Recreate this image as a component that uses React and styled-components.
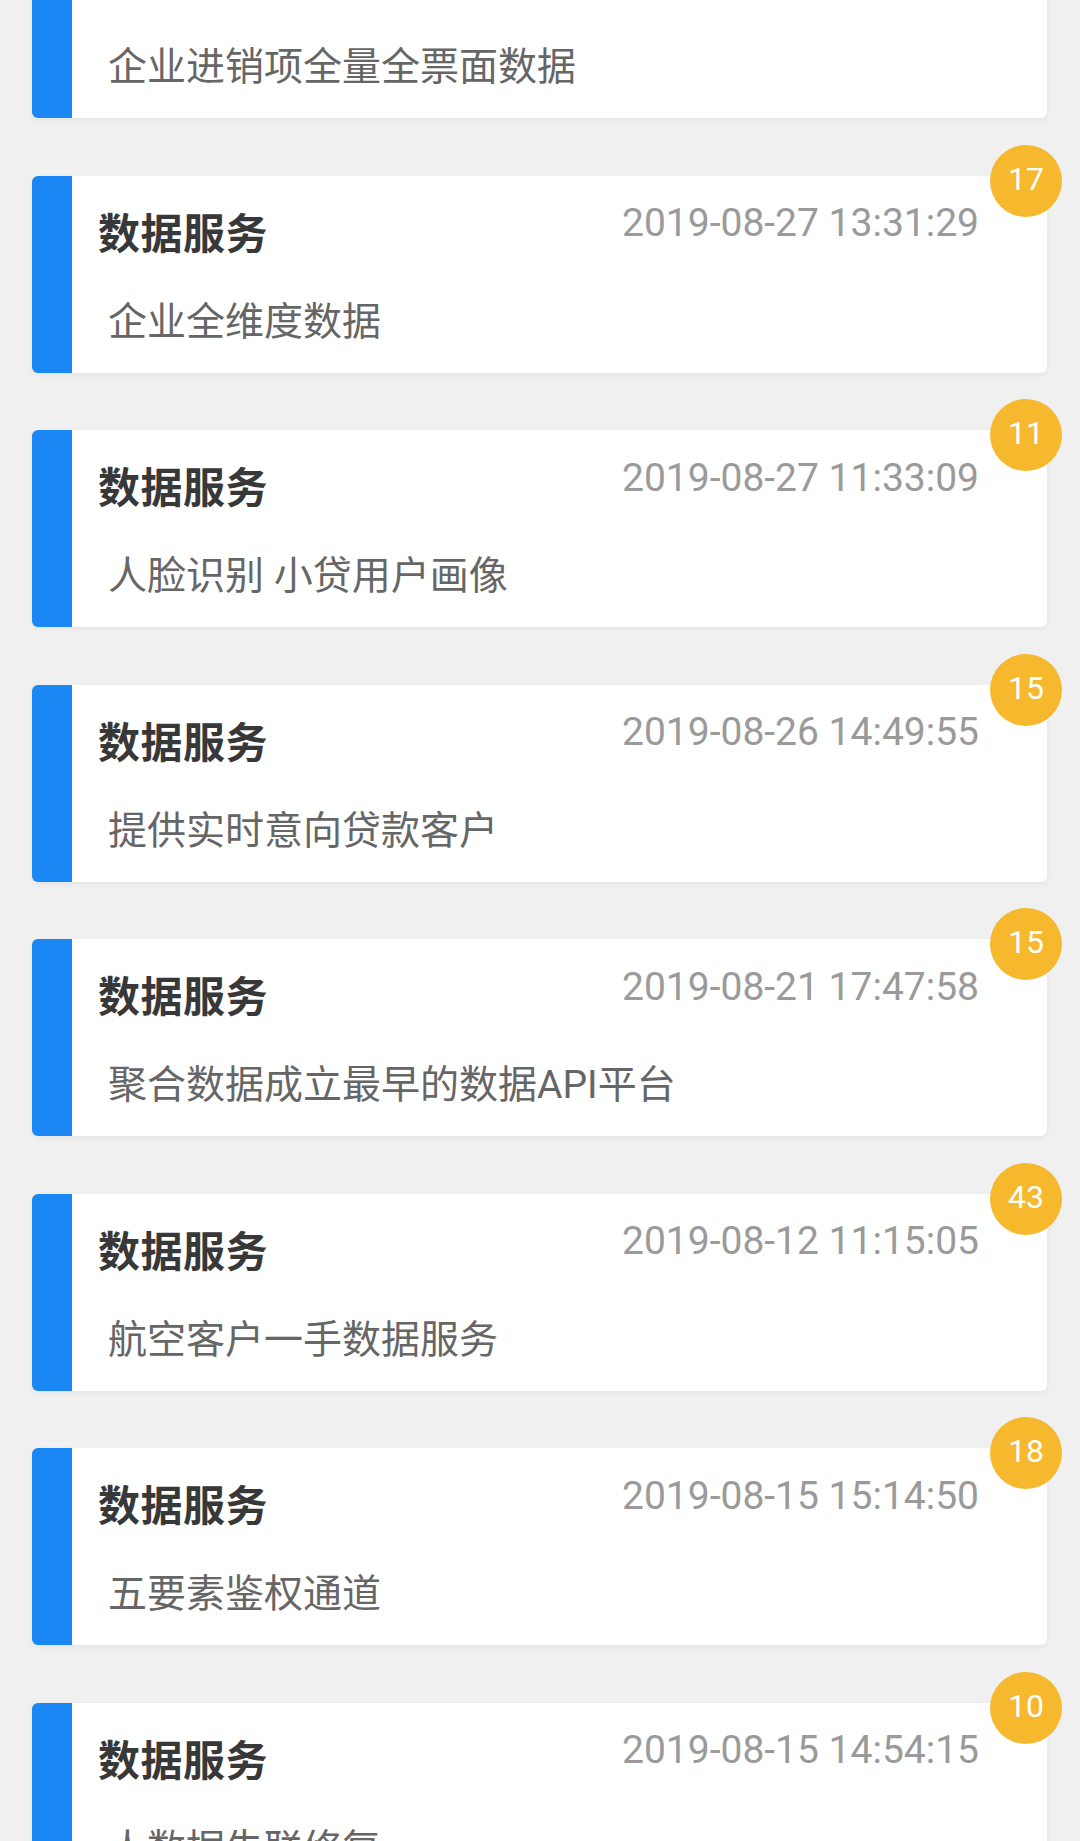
import React from 'react';
import styled, { createGlobalStyle } from 'styled-components';

const GlobalStyle = createGlobalStyle`
  html, body {
    margin: 0;
    padding: 0;
    background: #f0f0f0;
  }
  body {
    font-family: Roboto, "Noto Sans CJK SC", sans-serif;
    overflow: hidden;
  }
`;

const Page = styled.div`
  height: 1841px;
  overflow: hidden;
  background: #f0f0f0;
`;

// list is scrolled a bit, so first card is cut at the top
const List = styled.div`
  display: flex;
  flex-direction: column;
  gap: 57.5px;
  padding: 0 33px 0 32px;
  margin-top: -79px;
`;

const Card = styled.div`
  position: relative;
  box-sizing: border-box;
  height: 197px;
  background: #fff;
  border-left: 40px solid #1a87f5;
  border-radius: 6px;
  box-shadow: 0 2px 5px rgba(0, 0, 0, 0.05);
  padding: 20px 68px 0 26px;
  display: flex;
  flex-direction: column;
`;

const Header = styled.div`
  display: flex;
  justify-content: space-between;
  align-items: flex-start;
`;

const Title = styled.div`
  font-family: "Noto Sans CJK SC", sans-serif;
  font-size: 42px;
  font-weight: 700;
  line-height: 58px;
  color: #383838;
  margin-top: 6px;
  letter-spacing: 0.5px;
`;

const Time = styled.div`
  font-family: Roboto, sans-serif;
  font-size: 39px;
  line-height: 54px;
  color: #9a9a9a;
  margin-top: 0.5px;
`;

const Desc = styled.div`
  font-family: Roboto, "Noto Sans CJK SC", sans-serif;
  font-size: 39px;
  line-height: 54px;
  color: #666;
  margin-top: 35px;
  padding-left: 10px;
  white-space: nowrap;
`;

const Badge = styled.div`
  position: absolute;
  top: -31px;
  right: -15px;
  width: 72px;
  height: 72px;
  border-radius: 50%;
  background: #f6b82d;
  color: #fff;
  font-family: Roboto, sans-serif;
  font-size: 32px;
  line-height: 68px;
  text-align: center;
`;

const items = [
  { count: 9, time: '2019-08-28 09:12:40', desc: '企业进销项全量全票面数据' },
  { count: 17, time: '2019-08-27 13:31:29', desc: '企业全维度数据' },
  { count: 11, time: '2019-08-27 11:33:09', desc: '人脸识别 小贷用户画像' },
  { count: 15, time: '2019-08-26 14:49:55', desc: '提供实时意向贷款客户' },
  { count: 15, time: '2019-08-21 17:47:58', desc: '聚合数据成立最早的数据API平台' },
  { count: 43, time: '2019-08-12 11:15:05', desc: '航空客户一手数据服务' },
  { count: 18, time: '2019-08-15 15:14:50', desc: '五要素鉴权通道' },
  { count: 10, time: '2019-08-15 14:54:15', desc: '人数据失联修复' },
];

const App = () => {
  return (
    <Page>
      <GlobalStyle />
      <List>
        {items.map((item, i) => (
          <Card key={i}>
            <Header>
              <Title>数据服务</Title>
              <Time>{item.time}</Time>
            </Header>
            <Desc>{item.desc}</Desc>
            <Badge>{item.count}</Badge>
          </Card>
        ))}
      </List>
    </Page>
  );
};

export default App;
